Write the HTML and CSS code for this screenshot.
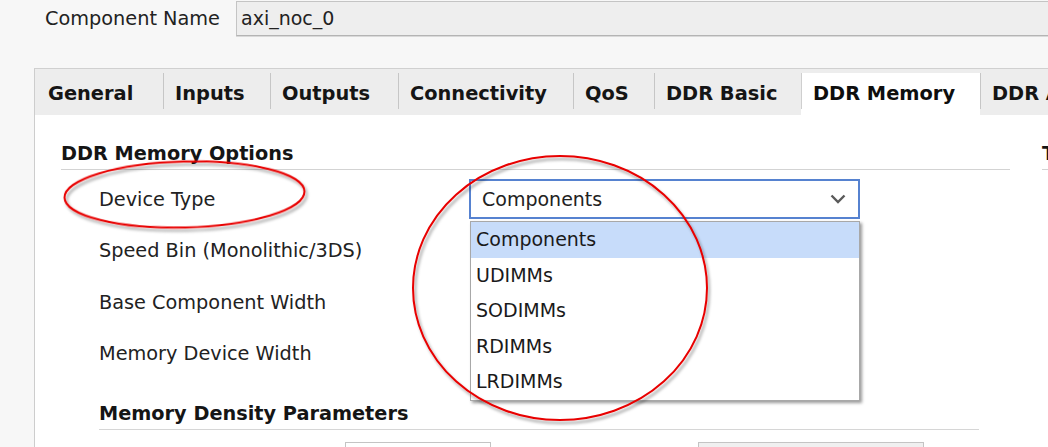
FILE: index.html
```html
<!DOCTYPE html>
<html>
<head>
<meta charset="utf-8">
<link rel="stylesheet" href="styles.css">
</head>
<body>
<div class="page">
  <div class="name-row">
    <span class="name-label">Component Name</span>
    <div class="name-input">axi_noc_0</div>
  </div>

  <div class="panel">
    <div class="tabs">
      <div class="tab first">General</div>
      <div class="tab">Inputs</div>
      <div class="tab">Outputs</div>
      <div class="tab">Connectivity</div>
      <div class="tab">QoS</div>
      <div class="tab">DDR Basic</div>
      <div class="tab active">DDR Memory</div>
      <div class="tab">DDR Address Mapping</div>
    </div>

    <div class="panel-body">
      <div class="col-main">
        <div class="section-title">DDR Memory Options</div>
        <div class="form">
          <span class="lbl">Device Type</span>
          <div class="combo-wrap">
            <div class="combo focused">
              <span>Components</span>
              <svg class="chev" width="16" height="10" viewBox="0 0 16 10"><polyline points="1.5,1.5 8,8 14.5,1.5" fill="none" stroke="#5a5a5a" stroke-width="2.4"/></svg>
            </div>
            <ul class="popup">
              <li class="sel">Components</li>
              <li>UDIMMs</li>
              <li>SODIMMs</li>
              <li>RDIMMs</li>
              <li>LRDIMMs</li>
            </ul>
          </div>
          <span class="lbl">Speed Bin (Monolithic/3DS)</span>
          <div></div>
          <span class="lbl">Base Component Width</span>
          <div></div>
          <span class="lbl">Memory Device Width</span>
          <div></div>
        </div>
        <div class="sub-title">Memory Density Parameters</div>
        <div class="density-row">
          <span></span>
          <div class="field"></div>
          <span></span>
          <div class="field disabled"></div>
        </div>
      </div>
      <div class="col-side">
        <div class="section-title">Timing Parameters</div>
      </div>
    </div>
  </div>

  <svg class="annot" width="1048" height="447" viewBox="0 0 1048 447">
    <defs>
      <filter id="sh" x="-10%" y="-10%" width="120%" height="130%">
        <feDropShadow dx="2" dy="3" stdDeviation="1.6" flood-color="#000" flood-opacity="0.38"/>
      </filter>
    </defs>
    <ellipse cx="184.5" cy="194.5" rx="120" ry="33" transform="rotate(-1.5 184.5 194.5)" fill="none" stroke="#e80000" stroke-width="2" filter="url(#sh)"/>
    <ellipse cx="560" cy="288" rx="147" ry="132" fill="none" stroke="#e80000" stroke-width="2" filter="url(#sh)"/>
  </svg>
</div>
</body>
</html>
```

FILE: styles.css
```css
* { box-sizing: border-box; }

html, body {
  margin: 0;
  padding: 0;
  background: #f7f7f7;
}

.page {
  position: relative;
  width: 1048px;
  height: 447px;
  overflow: hidden;
  font-family: "DejaVu Sans", sans-serif;
  font-size: 19.3px;
  color: #222222;
}

/* top row */
.name-row {
  display: flex;
  align-items: center;
  height: 37px;
  padding: 1px 0 1px 45px;
}
.name-label {
  width: 191px;
  font-size: 19.3px;
  flex: none;
}
.name-input {
  flex: none;
  width: 840px;
  height: 35px;
  background: #eeeeee;
  border: 1px solid #c4c4c4;
  border-bottom-color: #b4b4b4;
  box-shadow: 0 1px 0 #d9d9d9;
  padding-left: 4px;
  line-height: 33px;
  font-size: 19px;
}

/* panel */
.panel {
  margin: 31px 0 0 34px;
  border-top: 1px solid #d0d0d0;
  border-left: 1px solid #cdcdcd;
  height: 400px;
  display: flex;
  flex-direction: column;
}

.tabs {
  display: grid;
  grid-template-columns: 128px 107px 128px 175px 81px 147px 179px 300px;
  padding-top: 4px;
  background: #ededed;
  height: 46px;
  flex: none;
}
.tab {
  height: 42px;
  line-height: 41px;
  padding-left: 12px;
  font-weight: bold;
  font-size: 19.4px;
  color: #151515;
  white-space: nowrap;
  background: linear-gradient(#c6c6c6, #c6c6c6) left top / 1px 36px no-repeat;
}
.tab.first {
  padding-left: 13px;
  background: none;
}
.tab.active {
  background: #ffffff linear-gradient(#cfcfcf, #cfcfcf) left top / 1px 36px no-repeat;
  color: #0e0e0e;
}

.panel-body {
  flex: 1;
  background: #ffffff;
  display: flex;
  gap: 32px;
  padding: 28px 0 0 26px;
}

.col-main {
  width: 949px;
  flex: none;
}
.col-side {
  width: 300px;
  flex: none;
}

.section-title {
  font-weight: bold;
  line-height: 22px;
  padding-bottom: 4px;
  border-bottom: 1px solid #d3d3d3;
  white-space: nowrap;
  color: #151515;
}

.form {
  display: grid;
  grid-template-columns: 370px 391px;
  grid-auto-rows: 40px;
  row-gap: 11.3px;
  margin: 9px 0 0 38px;
}
.lbl {
  line-height: 41px;
  white-space: nowrap;
}

.combo-wrap {
  position: relative;
}
.combo {
  height: 40px;
  display: flex;
  align-items: center;
  justify-content: space-between;
  padding: 0 12px 0 11px;
  background: #ffffff;
  border: 2px solid #5682d0;
  font-size: 19px;
}
.chev {
  display: block;
}

.popup {
  position: absolute;
  top: 42px;
  left: 1px;
  width: 390px;
  margin: 0;
  padding: 0;
  list-style: none;
  background: #ffffff;
  border: 1px solid #a8a8a8;
  box-shadow: 2px 2px 3px rgba(0, 0, 0, 0.4);
  z-index: 5;
  font-size: 19px;
}
.popup li {
  height: 35.5px;
  line-height: 35.5px;
  padding-left: 5px;
  color: #1a1a1a;
}
.popup li.sel {
  background: #c7dcfa;
}

.sub-title {
  margin: 30.5px 31px 0 38px;
  font-weight: bold;
  line-height: 22px;
  padding-bottom: 4px;
  border-bottom: 1px solid #d6d6d6;
  color: #151515;
}

.density-row {
  display: grid;
  grid-template-columns: 246px 146px 207px 226px;
  margin: 12px 0 0 38px;
}
.field {
  height: 32px;
  border: 1px solid #c4c4c4;
  background: #ffffff;
}
.field.disabled {
  background: #f0f0f0;
}

.annot {
  position: absolute;
  left: 0;
  top: 0;
  pointer-events: none;
  z-index: 10;
}
```
